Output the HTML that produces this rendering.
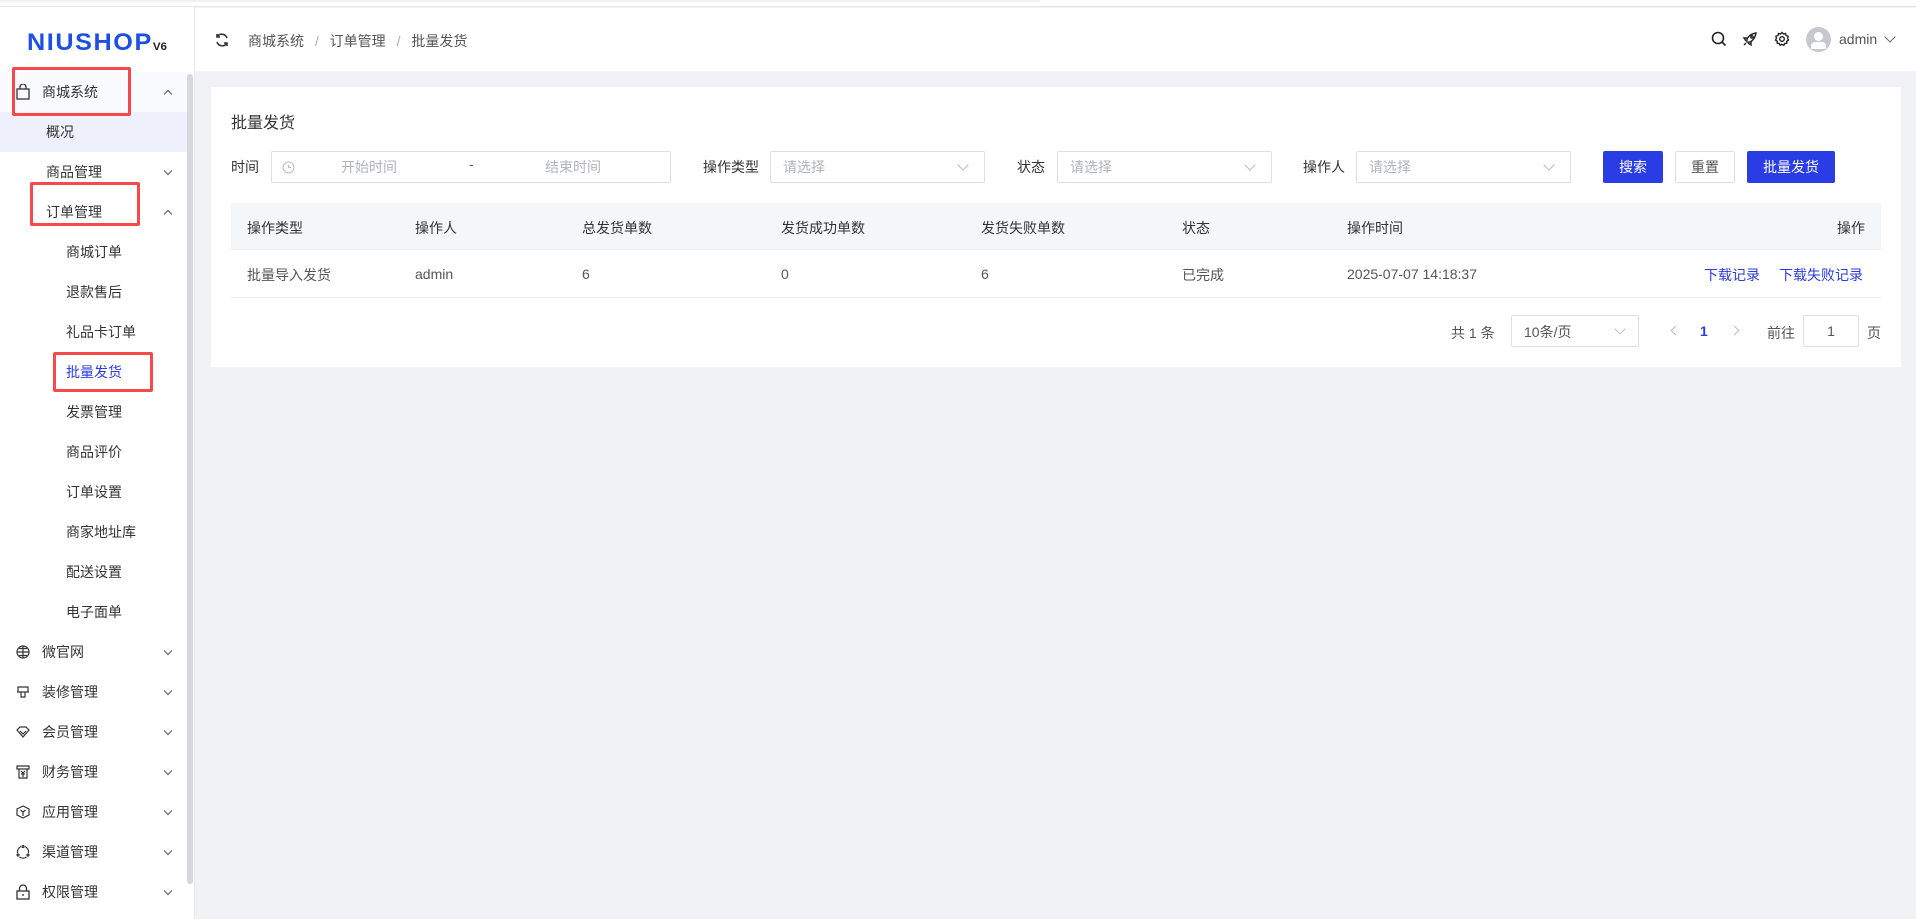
<!DOCTYPE html>
<html><head><meta charset="utf-8"><style>
*{margin:0;padding:0;box-sizing:border-box}
body{width:1916px;height:919px;overflow:hidden;background:#f0f2f5;font-family:"Liberation Sans","Noto Sans CJK SC",sans-serif;font-size:14px;color:#333;position:relative}
.a{position:absolute;white-space:nowrap}
.side{position:absolute;left:0;top:7px;width:195px;height:912px;background:#fff;border-right:1px solid #e8e8e8}
.mi{position:absolute;left:0;width:190px;height:40px;line-height:40px}
.chev{position:absolute;left:165px;top:16px;width:6px;height:6px;border-right:1px solid #555;border-bottom:1px solid #555;transform:rotate(45deg)}
.chev.up{top:19px;transform:rotate(-135deg)}
.red{position:absolute;border:3px solid #f5494b;border-radius:2px}
.inp{position:absolute;height:32px;border:1px solid #dcdfe6;background:#fff;border-radius:2px}
.ph{color:#b0b3bb}
.sc{position:absolute;width:8px;height:8px;border-right:1px solid #bbb;border-bottom:1px solid #bbb;transform:rotate(45deg)}
.btn{position:absolute;top:151px;height:32px;line-height:32px;text-align:center;border-radius:2px;font-size:14px}
.th{position:absolute;top:218px;color:#333}
.td{position:absolute;top:265px;color:#555}
</style></head><body>
<div class="a" style="left:0;top:0;width:1916px;height:7px;background:#fff;border-bottom:1px solid #e6e6e6"></div>
<div class="a" style="left:0;top:0;width:1040px;height:2px;background:#eef0f5"></div>
<!-- header -->
<div class="a" style="left:195px;top:8px;width:1721px;height:63px;background:#fff"></div>
<svg class="a" style="left:214px;top:32px" width="16" height="16" viewBox="0 0 16 16" fill="none" stroke="#333" stroke-width="1.6"><path d="M13 6A5.5 5.5 0 0 0 3 5M3 10a5.5 5.5 0 0 0 10 1"/><path d="M3 2v3h3M13 14v-3h-3"/></svg>
<div class="a" style="left:248px;top:31px;color:#555">商城系统 <span style="color:#aaa;margin:0 7px">/</span> 订单管理 <span style="color:#aaa;margin:0 7px">/</span> 批量发货</div>
<svg class="a" style="left:1711px;top:31px" width="16" height="16" viewBox="0 0 16 16" fill="none" stroke="#222" stroke-width="1.6"><circle cx="7" cy="7" r="5.5"/><path d="M11 11l3.5 3.5"/></svg>
<svg class="a" style="left:1742px;top:31px" width="16" height="16" viewBox="0 0 16 16" fill="none" stroke="#222" stroke-width="1.4"><path d="M5 11C4 7 8 3 14 2c-1 6-5 10-9 9z"/><circle cx="10" cy="6" r="1.2"/><path d="M5 7H2l2 3M9 11v3l-3-2M4 12l-2 2"/></svg>
<svg class="a" style="left:1774px;top:31px" width="16" height="16" viewBox="0 0 16 16" fill="none" stroke="#222" stroke-width="1.4"><circle cx="8" cy="8" r="2.3"/><path d="M8 1.5l1.5 1.5 2-.5.6 2 2 .8-.6 2 1 1.7-1.7 1.2v2l-2 .3-1 1.8-1.8-1-1.8 1-1-1.8-2-.3v-2L1.5 9l1-1.7-.6-2 2-.8.6-2 2 .5z"/></svg>
<div class="a" style="left:1806px;top:27px;width:25px;height:25px;border-radius:50%;background:#c5c8ce;overflow:hidden"><div class="a" style="left:8px;top:5px;width:9px;height:9px;border-radius:50%;background:#fff"></div><div class="a" style="left:5px;top:15px;width:15px;height:7px;border-radius:4px 4px 0 0;background:#fff"></div></div>
<div class="a" style="left:1839px;top:31px;color:#555">admin</div>
<div class="sc" style="left:1886px;top:33px;border-color:#666"></div>
<!-- sidebar -->
<div class="side">
<div class="a" style="left:27px;top:22px;font-size:24px;font-weight:bold;color:#1c4fe6;letter-spacing:1.5px;transform:scaleX(1.05);transform-origin:left">NIUSHOP<span style="font-size:11px;color:#222;letter-spacing:0">V6</span></div>
</div>
<div class="a" style="left:0;top:72px;width:190px;height:40px;background:#fafbff"></div>
<div class="a" style="left:0;top:112px;width:190px;height:40px;background:#eef0fb"></div>
<svg class="a" style="left:16px;top:84px" width="14" height="16" viewBox="0 0 14 16" fill="none" stroke="#333" stroke-width="1.3"><rect x="1" y="5" width="12" height="10"/><path d="M4 5V3a3 3 0 0 1 6 0v2"/></svg>
<div class="mi" style="top:72px"><span class="a" style="left:42px">商城系统</span><div class="chev up"></div></div>
<div class="mi" style="top:112px"><span class="a" style="left:46px">概况</span></div>
<div class="mi" style="top:152px"><span class="a" style="left:46px">商品管理</span><div class="chev"></div></div>
<div class="mi" style="top:192px"><span class="a" style="left:46px">订单管理</span><div class="chev up"></div></div>
<div class="mi" style="top:232px"><span class="a" style="left:66px">商城订单</span></div>
<div class="mi" style="top:272px"><span class="a" style="left:66px">退款售后</span></div>
<div class="mi" style="top:312px"><span class="a" style="left:66px">礼品卡订单</span></div>
<div class="mi" style="top:352px"><span class="a" style="left:66px;color:#2d3be3">批量发货</span></div>
<div class="mi" style="top:392px"><span class="a" style="left:66px">发票管理</span></div>
<div class="mi" style="top:432px"><span class="a" style="left:66px">商品评价</span></div>
<div class="mi" style="top:472px"><span class="a" style="left:66px">订单设置</span></div>
<div class="mi" style="top:512px"><span class="a" style="left:66px">商家地址库</span></div>
<div class="mi" style="top:552px"><span class="a" style="left:66px">配送设置</span></div>
<div class="mi" style="top:592px"><span class="a" style="left:66px">电子面单</span></div>
<div class="mi" style="top:632px"><span class="a" style="left:42px">微官网</span><div class="chev"></div></div>
<div class="mi" style="top:672px"><span class="a" style="left:42px">装修管理</span><div class="chev"></div></div>
<div class="mi" style="top:712px"><span class="a" style="left:42px">会员管理</span><div class="chev"></div></div>
<div class="mi" style="top:752px"><span class="a" style="left:42px">财务管理</span><div class="chev"></div></div>
<div class="mi" style="top:792px"><span class="a" style="left:42px">应用管理</span><div class="chev"></div></div>
<div class="mi" style="top:832px"><span class="a" style="left:42px">渠道管理</span><div class="chev"></div></div>
<div class="mi" style="top:872px"><span class="a" style="left:42px">权限管理</span><div class="chev"></div></div>
<svg class="a" style="left:16px;top:645px" width="14" height="14" viewBox="0 0 14 14" fill="none" stroke="#333" stroke-width="1.2"><circle cx="7" cy="7" r="6"/><path d="M1 7h12M7 1v12M3 3.5h8M3 10.5h8"/></svg>
<svg class="a" style="left:16px;top:685px" width="14" height="14" viewBox="0 0 14 14" fill="none" stroke="#333" stroke-width="1.2"><path d="M2 2h10v5H2zM1 7h12M5 7v5h4V7"/></svg>
<svg class="a" style="left:16px;top:725px" width="14" height="14" viewBox="0 0 14 14" fill="none" stroke="#333" stroke-width="1.2"><path d="M1 5l3-3h6l3 3-6 7z M4 6l3 3 3-3"/></svg>
<svg class="a" style="left:16px;top:765px" width="14" height="14" viewBox="0 0 14 14" fill="none" stroke="#333" stroke-width="1.2"><path d="M1 1h12v3H1zM3 4v9h8V4M5 6l2 2 2-2M7 8v4M5 9h4"/></svg>
<svg class="a" style="left:16px;top:805px" width="14" height="14" viewBox="0 0 14 14" fill="none" stroke="#333" stroke-width="1.2"><path d="M7 1l6 3v6l-6 3-6-3V4zM4.5 5L7 7l2.5-2M7 7v4"/></svg>
<svg class="a" style="left:16px;top:845px" width="14" height="14" viewBox="0 0 14 14" fill="none" stroke="#333" stroke-width="1.2"><path d="M5 1.5A6 6 0 0 0 1.5 8M9 1.5A6 6 0 0 1 12.5 8M3.5 12a6 6 0 0 0 7 0"/><circle cx="7" cy="1.5" r="1"/><circle cx="2" cy="10" r="1"/><circle cx="12" cy="10" r="1"/></svg>
<svg class="a" style="left:16px;top:884px" width="14" height="16" viewBox="0 0 14 16" fill="none" stroke="#333" stroke-width="1.3"><rect x="1" y="7" width="12" height="8"/><path d="M3.5 7V4.5a3.5 3.5 0 0 1 7 0V7M7 10v2"/></svg>
<div class="a" style="left:187px;top:74px;width:6px;height:810px;border-radius:3px;background:#d7d8dc"></div>
<div class="red" style="left:12px;top:67px;width:119px;height:49px"></div>
<div class="red" style="left:30px;top:182px;width:110px;height:44px"></div>
<div class="red" style="left:53px;top:352px;width:100px;height:40px"></div>
<!-- card -->
<div class="a" style="left:211px;top:87px;width:1690px;height:280px;background:#fff"></div>
<div class="a" style="left:231px;top:109px;font-size:16px;color:#333">批量发货</div>
<div class="a" style="left:231px;top:157px">时间</div>
<div class="inp" style="left:271px;top:151px;width:400px"></div>
<svg class="a" style="left:282px;top:161px" width="13" height="13" viewBox="0 0 13 13" fill="none" stroke="#bbb"><circle cx="6.5" cy="6.5" r="5.5"/><path d="M6.5 3.5v3h2.5"/></svg>
<div class="a ph" style="left:341px;top:157px">开始时间</div>
<div class="a" style="left:469px;top:156px;color:#555">-</div>
<div class="a ph" style="left:545px;top:157px">结束时间</div>
<div class="a" style="left:703px;top:157px">操作类型</div>
<div class="inp" style="left:770px;top:151px;width:215px"><span class="a ph" style="left:12px;top:5px">请选择</span><div class="sc" style="left:188px;top:9px"></div></div>
<div class="a" style="left:1017px;top:157px">状态</div>
<div class="inp" style="left:1057px;top:151px;width:215px"><span class="a ph" style="left:12px;top:5px">请选择</span><div class="sc" style="left:188px;top:9px"></div></div>
<div class="a" style="left:1303px;top:157px">操作人</div>
<div class="inp" style="left:1356px;top:151px;width:215px"><span class="a ph" style="left:12px;top:5px">请选择</span><div class="sc" style="left:188px;top:9px"></div></div>
<div class="btn" style="left:1603px;width:60px;background:#2a3ce3;color:#fff">搜索</div>
<div class="btn" style="left:1675px;width:60px;border:1px solid #dcdfe6;color:#555;line-height:30px">重置</div>
<div class="btn" style="left:1747px;width:88px;background:#2a3ce3;color:#fff">批量发货</div>
<div class="a" style="left:231px;top:203px;width:1650px;height:47px;background:#f5f6f8;border-bottom:1px solid #ebeef5"></div>
<div class="th" style="left:247px">操作类型</div>
<div class="th" style="left:415px">操作人</div>
<div class="th" style="left:582px">总发货单数</div>
<div class="th" style="left:781px">发货成功单数</div>
<div class="th" style="left:981px">发货失败单数</div>
<div class="th" style="left:1182px">状态</div>
<div class="th" style="left:1347px">操作时间</div>
<div class="th" style="left:1837px">操作</div>
<div class="a" style="left:231px;top:297px;width:1650px;height:1px;background:#ebeef5"></div>
<div class="td" style="left:247px">批量导入发货</div>
<div class="td" style="left:415px;top:266px">admin</div>
<div class="td" style="left:582px;top:266px">6</div>
<div class="td" style="left:781px;top:266px">0</div>
<div class="td" style="left:981px;top:266px">6</div>
<div class="td" style="left:1182px">已完成</div>
<div class="td" style="left:1347px;top:266px">2025-07-07 14:18:37</div>
<div class="td" style="left:1704px;color:#2d3be3">下载记录</div>
<div class="td" style="left:1779px;color:#2d3be3">下载失败记录</div>
<div class="a" style="left:1451px;top:323px;color:#555">共 1 条</div>
<div class="inp" style="left:1511px;top:315px;width:128px"><span class="a" style="left:12px;top:6px;color:#555">10条/页</span><div class="sc" style="left:104px;top:9px"></div></div>
<div class="a" style="left:1672px;top:327px;width:7px;height:7px;border-left:1px solid #bbb;border-bottom:1px solid #bbb;transform:rotate(45deg)"></div>
<div class="a" style="left:1700px;top:323px;color:#2d3be3;font-weight:bold">1</div>
<div class="a" style="left:1731px;top:327px;width:7px;height:7px;border-right:1px solid #bbb;border-top:1px solid #bbb;transform:rotate(45deg)"></div>
<div class="a" style="left:1767px;top:323px;color:#555">前往</div>
<div class="inp" style="left:1803px;top:315px;width:56px;text-align:center;line-height:30px;color:#555">1</div>
<div class="a" style="left:1867px;top:323px;color:#555">页</div>
</body></html>
